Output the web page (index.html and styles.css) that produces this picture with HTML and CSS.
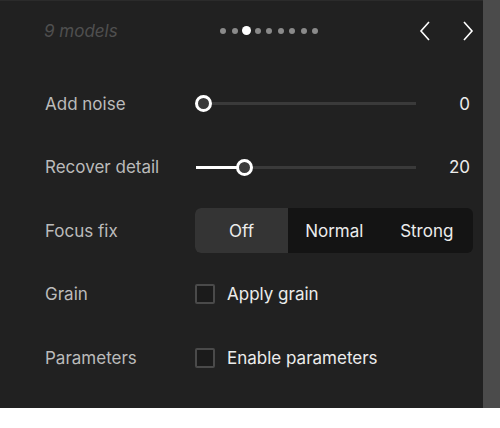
FILE: index.html
```html
<!DOCTYPE html>
<html lang="en">
<head>
    <meta charset="UTF-8">
    <meta name="viewport" content="width=device-width, initial-scale=1.0">
    <title>Model settings</title>
    <link rel="stylesheet" href="styles.css">
</head>
<body>
    <div class="frame">
        <div class="panel">
            <div class="header">
                <span class="count">9 models</span>
                <div class="dots">
                    <span class="dot"></span>
                    <span class="dot"></span>
                    <span class="dot active"></span>
                    <span class="dot"></span>
                    <span class="dot"></span>
                    <span class="dot"></span>
                    <span class="dot"></span>
                    <span class="dot"></span>
                    <span class="dot"></span>
                </div>
                <div class="arrows">
                    <svg width="12" height="20" viewBox="0 0 12 20"><path d="M10 1 L2 10 L10 19" fill="none" stroke="#fff" stroke-width="1.6"/></svg>
                    <svg width="12" height="20" viewBox="0 0 12 20"><path d="M2 1 L10 10 L2 19" fill="none" stroke="#fff" stroke-width="1.6"/></svg>
                </div>
            </div>

            <div class="rows">
                <div class="row">
                    <span class="label">Add noise</span>
                    <div class="slider" style="--v: 0">
                        <div class="track">
                            <div class="fill"></div>
                            <div class="thumb"></div>
                        </div>
                        <span class="value">0</span>
                    </div>
                </div>

                <div class="row">
                    <span class="label">Recover detail</span>
                    <div class="slider" style="--v: 20">
                        <div class="track">
                            <div class="fill"></div>
                            <div class="thumb"></div>
                        </div>
                        <span class="value">20</span>
                    </div>
                </div>

                <div class="row">
                    <span class="label">Focus fix</span>
                    <div class="segments">
                        <span class="segment selected">Off</span>
                        <span class="segment">Normal</span>
                        <span class="segment">Strong</span>
                    </div>
                </div>

                <div class="row">
                    <span class="label">Grain</span>
                    <label class="check"><span class="box"></span>Apply grain</label>
                </div>

                <div class="row">
                    <span class="label">Parameters</span>
                    <label class="check"><span class="box"></span>Enable parameters</label>
                </div>
            </div>
        </div>
        <div class="scrollbar"></div>
    </div>
</body>
</html>
```

FILE: styles.css
```css
body {
    margin: 0;
    background: #fff;
    font-family: Inter, "Liberation Sans", sans-serif;
}
.frame {
    display: flex;
    width: 500px;
    height: 408px;
}
.panel {
    flex: 1;
    background: #212121;
    border-top: 1px solid #2b2b2b;
    box-sizing: border-box;
    padding: 0 9px 0 45px;
}
.scrollbar {
    width: 17px;
    background: #4b4b4b;
}
.header {
    display: flex;
    align-items: center;
    height: 59px;
    margin-left: -1px;
}
.count {
    width: 176px;
    font-size: 17px;
    font-style: italic;
    color: #4f4f4f;
}
.dots {
    display: flex;
    align-items: center;
    gap: 5.5px;
}
.dot {
    width: 6px;
    height: 6px;
    border-radius: 50%;
    background: #8a8a8a;
}
.dot.active {
    width: 9px;
    height: 9px;
    margin: 0 -1.5px;
    background: #fff;
}
.arrows {
    margin-left: auto;
    display: flex;
    gap: 31px;
}
.rows {
    padding-top: 12px;
}
.row {
    display: flex;
    align-items: center;
    height: 63.5px;
}
.label {
    width: 150px;
    font-size: 17px;
    color: #bbb;
}
.slider {
    flex: 1;
    display: flex;
    align-items: center;
}
.track {
    position: relative;
    width: 220px;
    height: 3px;
    margin-left: 1px;
    background: #3a3a3a;
}
.fill {
    width: calc(var(--v) * 2.04px + 7px);
    height: 100%;
    background: #fff;
}
.thumb {
    position: absolute;
    top: -7px;
    left: calc(var(--v) * 2.04px - 1px);
    width: 11px;
    height: 11px;
    border: 3px solid #fff;
    border-radius: 50%;
    background: #3a3a3a;
}
.value {
    flex: 1;
    text-align: right;
    padding-right: 4px;
    font-size: 17px;
    color: #ececec;
}
.segments {
    flex: 1;
    display: flex;
    height: 45px;
    background: #141414;
    border-radius: 6px;
    overflow: hidden;
    margin-right: 1px;
}
.segment {
    flex: 1;
    display: flex;
    align-items: center;
    justify-content: center;
    font-size: 17px;
    color: #ececec;
}
.segment.selected {
    flex: 0 0 93px;
    background: #343434;
}
.check {
    display: flex;
    align-items: center;
    gap: 12px;
    font-size: 17px;
    color: #ececec;
}
.box {
    width: 16px;
    height: 16px;
    border: 2px solid #4a4a4a;
    border-radius: 2px;
    background: #1b1b1b;
}
```
